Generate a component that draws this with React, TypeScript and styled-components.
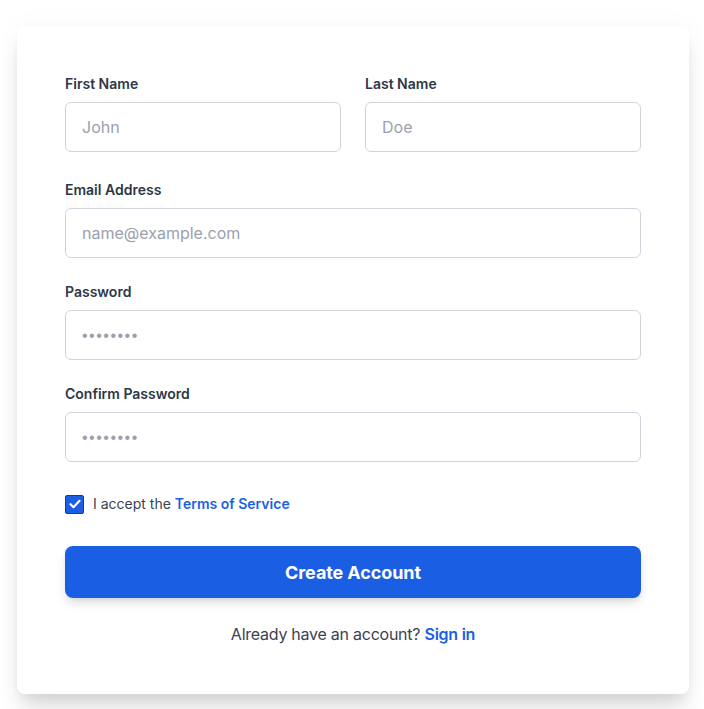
import styled, { createGlobalStyle } from 'styled-components'

const GlobalStyle = createGlobalStyle`
  body {
    margin: 0;
    background: #ffffff;
    font-family: Inter, "Liberation Sans", Arial, sans-serif;
    -webkit-font-smoothing: antialiased;
  }
`

const Page = styled.div`
  padding: 26px 15px 16px 17px;
`

const Card = styled.form`
  width: 672px;
  box-sizing: border-box;
  padding: 48px;
  background: #fff;
  border-radius: 8px;
  box-shadow: 0 20px 25px -5px rgba(0, 0, 0, 0.12), 0 8px 12px -4px rgba(0, 0, 0, 0.06), 0 0 24px rgba(0, 0, 0, 0.04);
`

const Row = styled.div`
  display: grid;
  grid-template-columns: 1fr 1fr;
  gap: 24px;
  margin-bottom: 28px;
`

const Field = styled.div<{ $last?: boolean }>`
  display: flex;
  flex-direction: column;
  margin-bottom: ${({ $last }) => ($last ? '0' : '24px')};
`

const Label = styled.label`
  font-size: 14px;
  line-height: 20px;
  font-weight: 600;
  color: #2d3748;
  margin-bottom: 8px;
`

const Input = styled.input`
  box-sizing: border-box;
  height: 50px;
  width: 100%;
  padding: 0 16px;
  border: 1px solid #cfd4dc;
  border-radius: 6px;
  font-family: inherit;
  font-size: 16px;
  color: #2d3748;
  background: #fff;
  outline: none;

  &::placeholder {
    color: #9aa1ad;
  }

  &[type='password']::placeholder {
    font-family: "Liberation Sans", Arial, sans-serif;
    letter-spacing: 1.5px;
  }
`

const Terms = styled.label`
  display: flex;
  align-items: center;
  gap: 9px;
  margin-top: 32px;
  font-size: 14px;
  line-height: 20px;
  color: #3a4252;
`

const Box = styled.span`
  display: inline-flex;
  align-items: center;
  justify-content: center;
  width: 19px;
  height: 19px;
  box-sizing: border-box;
  background: #1a5fe3;
  border: 1.5px solid #0d3d9e;
  border-radius: 2px;
`

const Link = styled.a`
  color: #1a5fe3;
  font-weight: 600;
  text-decoration: none;
`

const Button = styled.button`
  display: block;
  width: 100%;
  height: 52px;
  margin-top: 32px;
  border: none;
  border-radius: 8px;
  background: #1a5fe3;
  color: #fff;
  font-family: inherit;
  font-size: 18px;
  font-weight: 700;
  letter-spacing: -0.1px;
  box-shadow: 0 6px 12px -2px rgba(0, 0, 0, 0.14), 0 3px 6px -3px rgba(0, 0, 0, 0.1);
  cursor: pointer;
`

const Footer = styled.p`
  margin: 24px 0 0;
  text-align: center;
  font-size: 16px;
  line-height: 24px;
  letter-spacing: -0.25px;
  color: #3a4252;
`

const dots = '••••••••'

export default function App() {
  return (
    <Page>
      <GlobalStyle />
      <Card onSubmit={(e) => e.preventDefault()}>
        <Row>
          <Field $last>
            <Label>First Name</Label>
            <Input placeholder="John" />
          </Field>
          <Field $last>
            <Label>Last Name</Label>
            <Input placeholder="Doe" />
          </Field>
        </Row>
        <Field>
          <Label>Email Address</Label>
          <Input type="email" placeholder="name@example.com" />
        </Field>
        <Field>
          <Label>Password</Label>
          <Input type="password" placeholder={dots} />
        </Field>
        <Field $last>
          <Label>Confirm Password</Label>
          <Input type="password" placeholder={dots} />
        </Field>
        <Terms>
          <Box>
            <svg width="12" height="10" viewBox="0 0 12 10" fill="none">
              <path d="M1.5 5.2 4.5 8.2 10.5 1.8" stroke="#fff" strokeWidth="2.2" strokeLinecap="round" strokeLinejoin="round" />
            </svg>
          </Box>
          <span>
            I accept the <Link href="#">Terms of Service</Link>
          </span>
        </Terms>
        <Button type="submit">Create Account</Button>
        <Footer>
          Already have an account? <Link href="#">Sign in</Link>
        </Footer>
      </Card>
    </Page>
  )
}
